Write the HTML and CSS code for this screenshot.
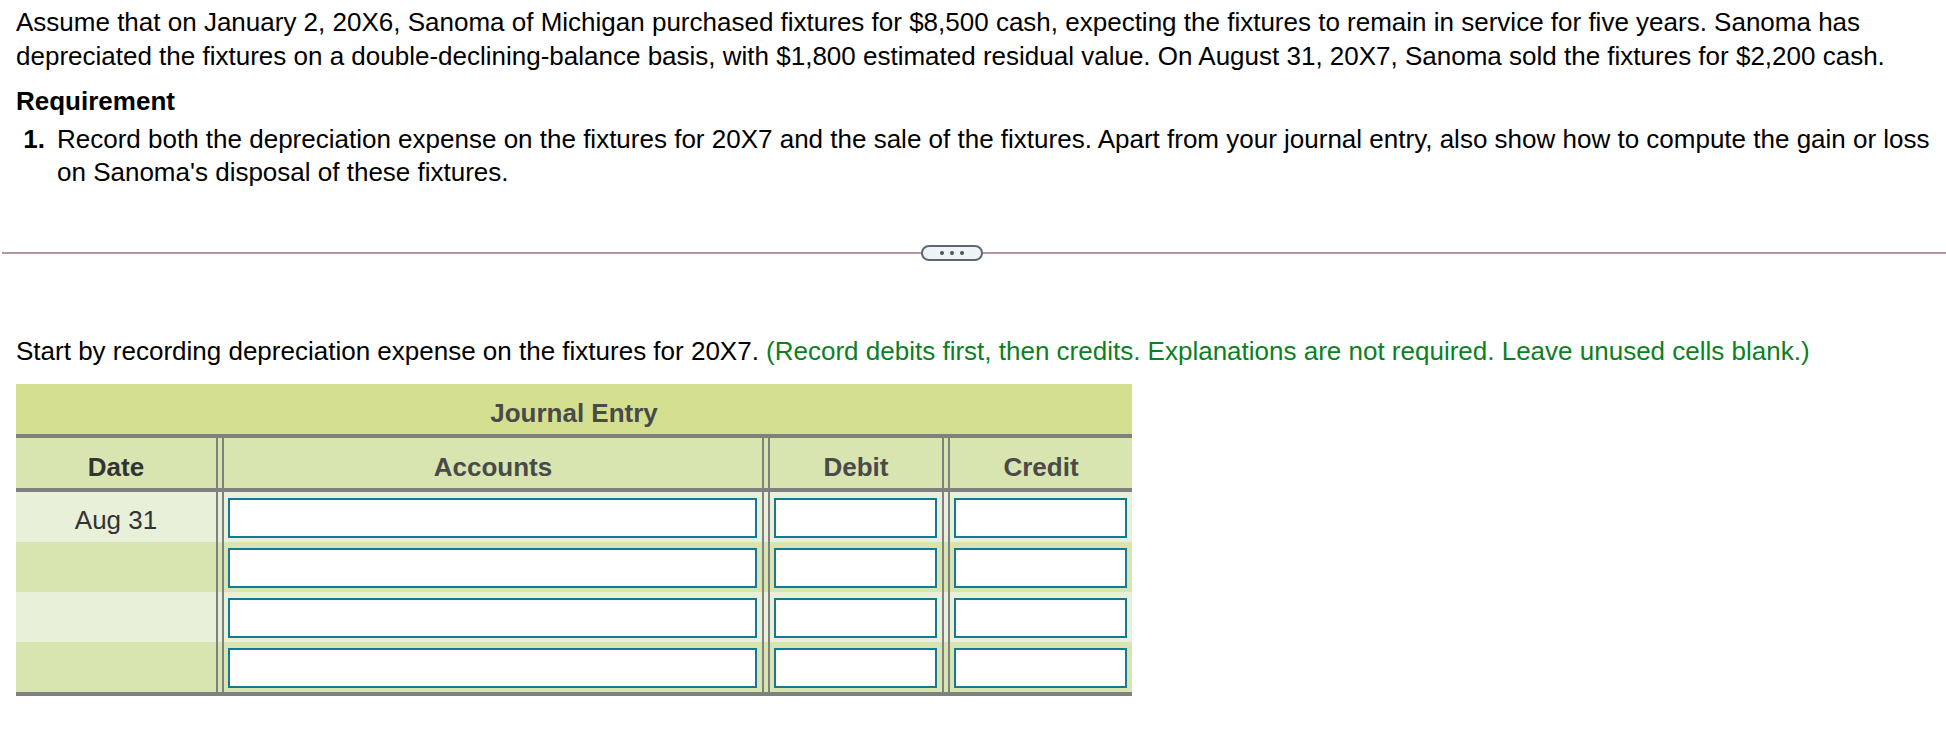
FILE: index.html
```html
<!DOCTYPE html>
<html lang="en">
<head>
<meta charset="utf-8">
<title>Journal Entry</title>
<link rel="stylesheet" href="styles.css">
</head>
<body>
<div class="page">
  <p class="intro">Assume that on January 2, 20X6, Sanoma of Michigan purchased fixtures for $8,500 cash, expecting the fixtures to remain in service for five years. Sanoma has<br>depreciated the fixtures on a double-declining-balance basis, with $1,800 estimated residual value. On August 31, 20X7, Sanoma sold the fixtures for $2,200 cash.</p>
  <h3 class="req-title">Requirement</h3>
  <div class="req">
    <span class="req-num">1.</span>
    <span class="req-text">Record both the depreciation expense on the fixtures for 20X7 and the sale of the fixtures. Apart from your journal entry, also show how to compute the gain or loss<br>on Sanoma's disposal of these fixtures.</span>
  </div>
</div>
<div class="sep">
  <span class="sep-line sep-left"></span>
  <button class="more" type="button"><i class="dot"></i><i class="dot"></i><i class="dot"></i></button>
  <span class="sep-line sep-right"></span>
</div>
<div class="page">
  <p class="instr">Start by recording depreciation expense on the fixtures for 20X7. <span class="hint">(Record debits first, then credits. Explanations are not required. Leave unused cells blank.)</span></p>
  <div class="journal">
    <div class="je-title">Journal Entry</div>
    <div class="je-row je-head">
      <div class="cell c-date">Date</div>
      <div class="cell c-acct">Accounts</div>
      <div class="cell c-debit">Debit</div>
      <div class="cell c-credit">Credit</div>
    </div>
    <div class="je-row light">
      <div class="cell c-date">Aug 31</div>
      <div class="cell c-acct"><input class="box" type="text"></div>
      <div class="cell c-debit"><input class="box" type="text"></div>
      <div class="cell c-credit"><input class="box" type="text"></div>
    </div>
    <div class="je-row dark">
      <div class="cell c-date"></div>
      <div class="cell c-acct"><input class="box" type="text"></div>
      <div class="cell c-debit"><input class="box" type="text"></div>
      <div class="cell c-credit"><input class="box" type="text"></div>
    </div>
    <div class="je-row light">
      <div class="cell c-date"></div>
      <div class="cell c-acct"><input class="box" type="text"></div>
      <div class="cell c-debit"><input class="box" type="text"></div>
      <div class="cell c-credit"><input class="box" type="text"></div>
    </div>
    <div class="je-row dark last">
      <div class="cell c-date"></div>
      <div class="cell c-acct"><input class="box" type="text"></div>
      <div class="cell c-debit"><input class="box" type="text"></div>
      <div class="cell c-credit"><input class="box" type="text"></div>
    </div>
  </div>
</div>
</body>
</html>
```
FILE: styles.css
```css
html, body {
  margin: 0;
  padding: 0;
  background: #ffffff;
}
body {
  font-family: "Liberation Sans", Arial, Helvetica, sans-serif;
  font-size: 26px;
  line-height: 33px;
  color: #000000;
}
.page {
  padding: 0 8px 0 16px;
}
.intro {
  margin: 5px 0 0 0;
  line-height: 34px;
}
.req-title {
  margin: 12px 0 0 0;
  font-size: 26px;
  font-weight: bold;
  line-height: 33px;
}
.req {
  display: grid;
  grid-template-columns: 41px 1fr;
  margin-top: 5px;
}
.req-num {
  font-weight: bold;
  text-align: right;
  padding-right: 12px;
}
.sep {
  display: flex;
  align-items: center;
  margin-top: 56px;
  height: 16px;
  padding-left: 2px;
}
.sep-line {
  height: 2px;
  background: #b5969f;
}
.sep-left {
  width: 919px;
}
.sep-right {
  flex: 1;
}
.more {
  box-sizing: border-box;
  width: 62px;
  height: 16px;
  padding: 0;
  margin: 0;
  border: 2px solid #5b6975;
  border-radius: 8px;
  background: #eef3f6;
  display: flex;
  align-items: center;
  justify-content: center;
  gap: 6px;
}
.dot {
  display: block;
  width: 4px;
  height: 4px;
  border-radius: 50%;
  background: #4b5560;
}
.instr {
  margin: 74px 0 0 0;
}
.hint {
  color: #0c7f1f;
}
.journal {
  margin-top: 16px;
  width: 1116px;
}
.je-title {
  box-sizing: border-box;
  height: 54px;
  padding-top: 9px;
  background: #d4e08f;
  border-bottom: 4px solid #808080;
  text-align: center;
  font-weight: bold;
  color: #4a4a4a;
  line-height: 40px;
}
.je-row {
  display: flex;
  gap: 4px;
  height: 50px;
}
.je-head {
  box-sizing: content-box;
  background: #d9e5b1;
  border-bottom: 4px solid #808080;
  font-weight: bold;
  color: #4a4a4a;
}
.je-head .cell {
  justify-content: center;
  align-items: center;
  padding-top: 8px;
}
.light {
  background: #e8f0da;
}
.dark {
  background: #d9e5b1;
}
.last {
  box-sizing: content-box;
  border-bottom: 4px solid #808080;
}
.cell {
  box-sizing: border-box;
  display: flex;
  height: 100%;
}
.c-date {
  width: 202px;
  border-right: 2px solid #808080;
  justify-content: center;
  align-items: center;
  color: #333333;
  padding-top: 6px;
}
.c-acct {
  width: 542px;
  border-left: 2px solid #808080;
  border-right: 2px solid #808080;
}
.c-debit {
  width: 176px;
  border-left: 2px solid #808080;
  border-right: 2px solid #808080;
}
.c-credit {
  flex: 1;
  border-left: 2px solid #808080;
}
.je-row:not(.je-head) .c-acct,
.je-row:not(.je-head) .c-debit,
.je-row:not(.je-head) .c-credit {
  padding: 6px 5px 4px 4px;
}
.box {
  box-sizing: border-box;
  width: 100%;
  height: 40px;
  margin: 0;
  border: 2px solid #137a95;
  border-radius: 0;
  background: #ffffff;
  padding: 0 6px;
  font: inherit;
  outline: none;
}
```
